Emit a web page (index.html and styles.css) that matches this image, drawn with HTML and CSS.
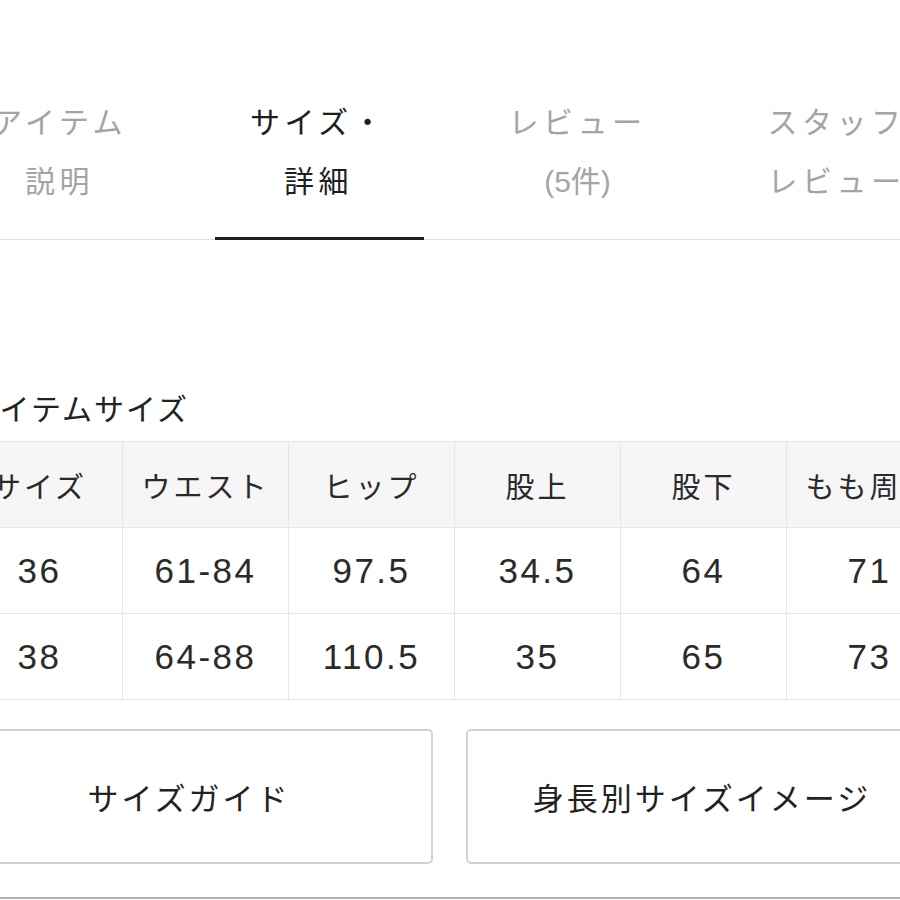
FILE: index.html
```html
<!DOCTYPE html>
<html lang="ja">
<head>
<meta charset="utf-8">
<title>サイズ・詳細</title>
<link rel="stylesheet" href="styles.css">
</head>
<body>
<div class="page">
  <nav class="tabs">
    <div class="tab">アイテム<br>説明</div>
    <div class="tab active">サイズ・<br>詳細</div>
    <div class="tab">レビュー<br><span class="count">(5件)</span></div>
    <div class="tab">スタッフ<br>レビュー</div>
  </nav>

  <section class="size-section">
    <h2 class="section-title">アイテムサイズ</h2>
    <div class="size-table">
      <div class="cell head">サイズ</div>
      <div class="cell head">ウエスト</div>
      <div class="cell head">ヒップ</div>
      <div class="cell head">股上</div>
      <div class="cell head">股下</div>
      <div class="cell head">もも周り</div>

      <div class="cell num">36</div>
      <div class="cell num">61-84</div>
      <div class="cell num">97.5</div>
      <div class="cell num">34.5</div>
      <div class="cell num">64</div>
      <div class="cell num">71</div>

      <div class="cell num">38</div>
      <div class="cell num">64-88</div>
      <div class="cell num">110.5</div>
      <div class="cell num">35</div>
      <div class="cell num">65</div>
      <div class="cell num">73</div>
    </div>

    <div class="buttons">
      <div class="btn">サイズガイド</div>
      <div class="btn">身長別サイズイメージ</div>
    </div>
  </section>
  <div class="bottom-rule"></div>
</div>
</body>
</html>
```

FILE: styles.css
```css
html, body {
  margin: 0;
  padding: 0;
  background: #ffffff;
  overflow: hidden;
}

body {
  width: 900px;
  height: 900px;
  font-family: "Liberation Sans", "Noto Sans CJK JP", sans-serif;
  color: #333333;
}

.page {
  width: 900px;
  overflow: hidden;
}

/* Tabs */
.tabs {
  display: flex;
  margin-left: -70px;
  width: 1100px;
  padding-top: 93px;
  border-bottom: 1px solid #dedede;
}

.tab {
  position: relative;
  flex: 0 0 259px;
  text-align: center;
  font-size: 30px;
  line-height: 59px;
  letter-spacing: 4.5px;
  color: #a4a4a4;
  padding-bottom: 28px;
}

.tab .count {
  letter-spacing: 0;
}

.tab.active {
  color: #1e1e1e;
}

.tab.active::after {
  content: "";
  position: absolute;
  left: 26px;
  right: 24px;
  bottom: -1px;
  height: 3px;
  background: #1e1e1e;
}

/* Section */
.size-section {
  margin-left: -43px;
}

.section-title {
  margin: 150px 0 11px 12px;
  font-size: 30px;
  font-weight: normal;
  line-height: 40px;
  letter-spacing: 2px;
  color: #222222;
}

.size-table {
  display: grid;
  grid-template-columns: repeat(6, 166px);
  border-top: 1px solid #e4e4e4;
  width: 1100px;
}

.cell {
  height: 85px;
  display: flex;
  align-items: center;
  justify-content: center;
  border-right: 1px solid #e6e6e6;
  border-bottom: 1px solid #e6e6e6;
  box-sizing: content-box;
  color: #2a2a2a;
}

.cell.head {
  background: #f6f6f6;
  font-size: 29px;
  letter-spacing: 3px;
}

.cell.num {
  background: #ffffff;
  font-size: 35px;
  letter-spacing: 2.5px;
}

/* Buttons */
.buttons {
  display: flex;
  gap: 33px;
  margin-top: 29px;
  margin-left: -2px;
}

.btn {
  flex: 0 0 478px;
  height: 135px;
  box-sizing: border-box;
  border: 2px solid #d3d3d3;
  border-radius: 5px;
  display: flex;
  align-items: center;
  justify-content: center;
  font-size: 31px;
  letter-spacing: 3px;
  color: #222222;
  padding-right: 10px;
}

.btn + .btn {
  padding-right: 6px;
  padding-left: 0;
}

.bottom-rule {
  margin-top: 33px;
  height: 2px;
  background: #b4b4b4;
}
```
